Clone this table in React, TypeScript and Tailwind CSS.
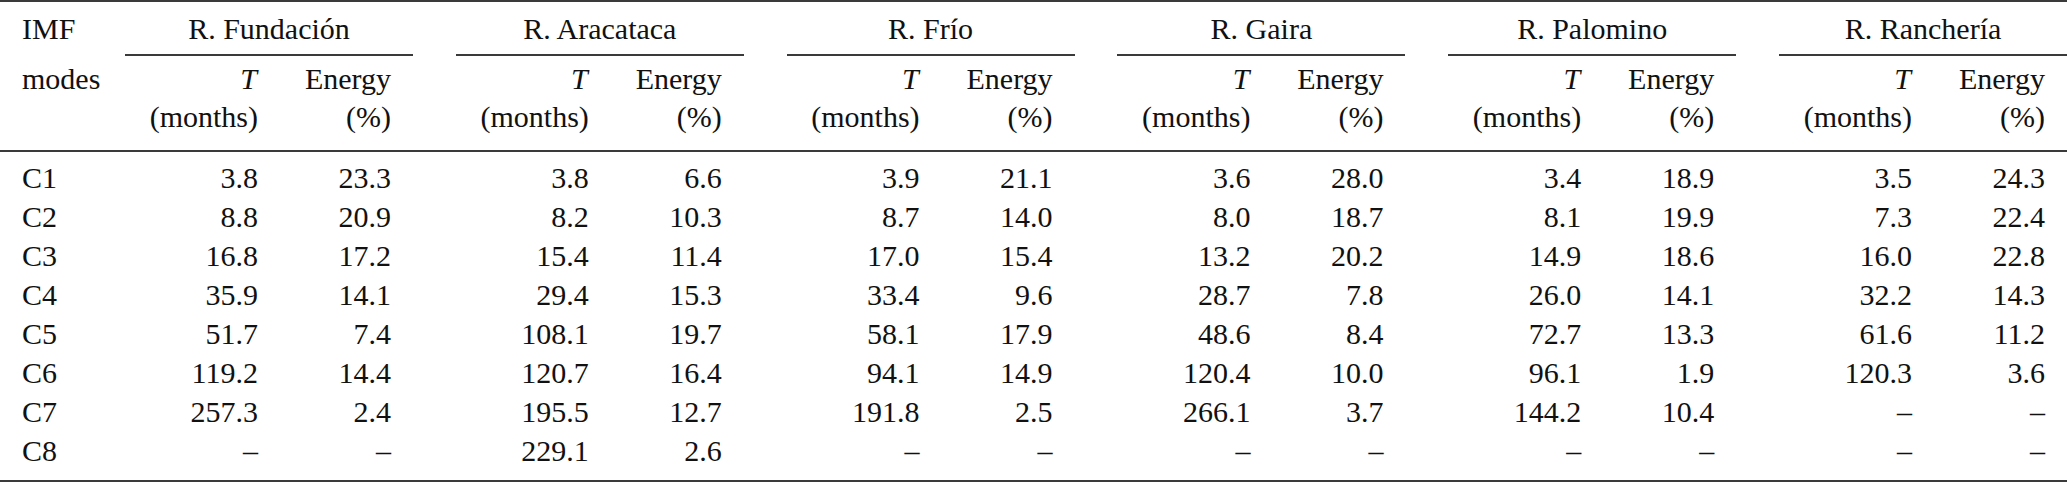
import React from 'react';

type Cell = [string, string];

const rivers = ['R. Fundación', 'R. Aracataca', 'R. Frío', 'R. Gaira', 'R. Palomino', 'R. Ranchería'];

const rows: { mode: string; values: Cell[] }[] = [
  { mode: 'C1', values: [['3.8', '23.3'], ['3.8', '6.6'], ['3.9', '21.1'], ['3.6', '28.0'], ['3.4', '18.9'], ['3.5', '24.3']] },
  { mode: 'C2', values: [['8.8', '20.9'], ['8.2', '10.3'], ['8.7', '14.0'], ['8.0', '18.7'], ['8.1', '19.9'], ['7.3', '22.4']] },
  { mode: 'C3', values: [['16.8', '17.2'], ['15.4', '11.4'], ['17.0', '15.4'], ['13.2', '20.2'], ['14.9', '18.6'], ['16.0', '22.8']] },
  { mode: 'C4', values: [['35.9', '14.1'], ['29.4', '15.3'], ['33.4', '9.6'], ['28.7', '7.8'], ['26.0', '14.1'], ['32.2', '14.3']] },
  { mode: 'C5', values: [['51.7', '7.4'], ['108.1', '19.7'], ['58.1', '17.9'], ['48.6', '8.4'], ['72.7', '13.3'], ['61.6', '11.2']] },
  { mode: 'C6', values: [['119.2', '14.4'], ['120.7', '16.4'], ['94.1', '14.9'], ['120.4', '10.0'], ['96.1', '1.9'], ['120.3', '3.6']] },
  { mode: 'C7', values: [['257.3', '2.4'], ['195.5', '12.7'], ['191.8', '2.5'], ['266.1', '3.7'], ['144.2', '10.4'], ['–', '–']] },
  { mode: 'C8', values: [['–', '–'], ['229.1', '2.6'], ['–', '–'], ['–', '–'], ['–', '–'], ['–', '–']] },
];

function Group({ last, children }: { last: boolean; children: React.ReactNode }) {
  return <div className={last ? 'w-[288px] shrink-0 flex' : 'w-[330.8px] shrink-0 flex'}>{children}</div>;
}

function Pair({ t, e }: { t: React.ReactNode; e: React.ReactNode }) {
  return (
    <>
      <div className="w-[133px] text-right">{t}</div>
      <div className="w-[133px] text-right">{e}</div>
    </>
  );
}

export default function App() {
  return (
    <div className="w-[2067px] h-[482px] bg-white text-[#111] text-[30px] [font-family:'Liberation_Serif','Times_New_Roman',serif]">
      {/* top rule */}
      <div className="h-[2px] bg-[#3a3a3a]" />

      {/* header line 1 */}
      <div className="flex pt-[7.4px] leading-[39px]">
        <div className="w-[125px] shrink-0 pl-[22px]">IMF</div>
        {rivers.map((name, i) => (
          <Group key={name} last={i === rivers.length - 1}>
            <div className="w-[288px] text-center pb-[6px] border-b-2 border-[#3a3a3a]">{name}</div>
          </Group>
        ))}
      </div>

      {/* header line 2 */}
      <div className="flex mt-[4px] leading-[38px]">
        <div className="w-[125px] shrink-0 pl-[22px]">modes</div>
        {rivers.map((name, i) => (
          <Group key={name} last={i === rivers.length - 1}>
            <Pair t={<span className="italic pr-[1px]">T</span>} e="Energy" />
          </Group>
        ))}
      </div>

      {/* header line 3 */}
      <div className="flex leading-[38px]">
        <div className="w-[125px] shrink-0" />
        {rivers.map((name, i) => (
          <Group key={name} last={i === rivers.length - 1}>
            <Pair t="(months)" e="(%)" />
          </Group>
        ))}
      </div>

      {/* midrule */}
      <div className="h-[2px] mt-[13.6px] bg-[#3a3a3a]" />

      {/* body */}
      <div className="pt-[6.3px] leading-[39px]">
        {rows.map((row) => (
          <div key={row.mode} className="flex">
            <div className="w-[125px] shrink-0 pl-[22px]">{row.mode}</div>
            {row.values.map(([t, e], i) => (
              <Group key={i} last={i === row.values.length - 1}>
                <Pair t={t} e={e} />
              </Group>
            ))}
          </div>
        ))}
      </div>

      {/* bottom rule */}
      <div className="h-[2px] mt-[9.3px] bg-[#3a3a3a]" />
    </div>
  );
}
